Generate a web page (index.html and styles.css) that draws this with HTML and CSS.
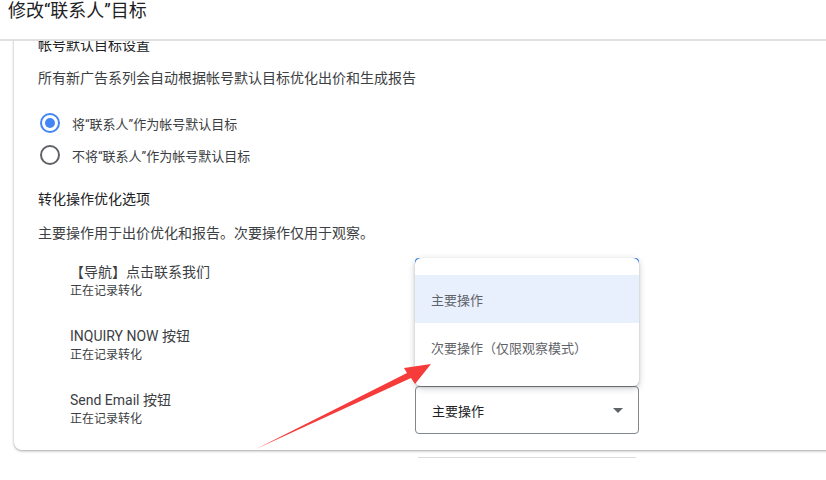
FILE: index.html
```html
<!DOCTYPE html>
<html>
  <head>
    <title>修改“联系人”目标</title>
    <link rel="stylesheet" href="styles.css">
  </head>
  <body>
    <!-- Dialog header -->
    <header class="top">
      <h1>修改“联系人”目标</h1>
    </header>

    <!-- Scrolled dialog content -->
    <main class="scroller">
      <section class="card">
        <h2 class="card-title">帐号默认目标设置</h2>
        <p class="desc">所有新广告系列会自动根据帐号默认目标优化出价和生成报告</p>

        <div class="radios">
          <label class="radio">
            <span class="radio-dot checked"></span>
            将“联系人”作为帐号默认目标
          </label>
          <label class="radio">
            <span class="radio-dot"></span>
            不将“联系人”作为帐号默认目标
          </label>
        </div>

        <h3 class="section-title">转化操作优化选项</h3>
        <p class="desc">主要操作用于出价优化和报告。次要操作仅用于观察。</p>

        <div class="actions">
          <div class="action">
            <div class="action-name">
              <div class="action-title">【导航】点击联系我们</div>
              <div class="action-sub">正在记录转化</div>
            </div>
            <div class="select focused">
              <span>主要操作</span>
              <span class="caret"></span>
              <!-- open dropdown menu -->
              <ul class="menu">
                <li class="menu-item active">主要操作</li>
                <li class="menu-item">次要操作（仅限观察模式）</li>
              </ul>
            </div>
          </div>

          <div class="action">
            <div class="action-name">
              <div class="action-title">INQUIRY NOW 按钮</div>
              <div class="action-sub">正在记录转化</div>
            </div>
            <div class="select">
              <span>主要操作</span>
              <span class="caret"></span>
            </div>
          </div>

          <div class="action">
            <div class="action-name">
              <div class="action-title">Send Email 按钮</div>
              <div class="action-sub">正在记录转化</div>
            </div>
            <div class="select">
              <span>主要操作</span>
              <span class="caret"></span>
            </div>
          </div>
        </div>
      </section>

      <div class="next-field"></div>
    </main>

    <!-- Annotation arrow drawn over the page -->
    <svg class="arrow" width="826" height="480" viewBox="0 0 826 480">
      <polygon points="256,449 407,373 404,368 431,364 415,384 411,378" fill="#f63b3b"/>
    </svg>
  </body>
</html>
```

FILE: styles.css
```css
body {
  margin: 0;
  font-family: Roboto, "Noto Sans CJK SC", sans-serif;
  color: #3c4043;
  background: #fff;
  width: 826px;
  height: 480px;
  overflow: hidden;
  position: relative;
}

.top {
  height: 39px;
  border-bottom: 2px solid #e0e0e0;
  padding-left: 8px;
}
.top h1 {
  margin: 0;
  font-size: 18px;
  font-weight: 400;
  line-height: 22px;
  color: #202124;
}

.scroller {
  height: 439px;
  overflow: hidden;
  padding-left: 14px;
}

.card {
  margin-top: -16px;
  margin-right: -40px;
  padding: 10px 0 16px 24px;
  background: #fff;
  border-radius: 8px;
  box-shadow: 0 1px 3px rgba(60, 64, 67, 0.35), 0 1px 2px rgba(60, 64, 67, 0.15);
}

.card-title,
.section-title {
  margin: 0;
  font-size: 14px;
  font-weight: 400;
  line-height: 20px;
  color: #202124;
}

.desc {
  margin: 13px 0 0;
  font-size: 14px;
  line-height: 20px;
}
.section-title {
  margin-top: 18px;
}
.section-title + .desc {
  margin-top: 14px;
}

.radios {
  margin-top: 19px;
  display: flex;
  flex-direction: column;
}
.radio {
  height: 32px;
  display: flex;
  align-items: center;
  gap: 12px;
  font-size: 13px;
  padding-left: 2px;
}
.radio-dot {
  width: 16px;
  height: 16px;
  border: 2px solid #5f6368;
  border-radius: 50%;
  display: flex;
  align-items: center;
  justify-content: center;
}
.radio-dot.checked {
  border-color: #4285f4;
}
.radio-dot.checked::after {
  content: "";
  width: 10px;
  height: 10px;
  border-radius: 50%;
  background: #4285f4;
}

.actions {
  margin-top: 15px;
  padding-left: 32px;
  display: flex;
  flex-direction: column;
  gap: 16px;
}
.action {
  display: grid;
  grid-template-columns: 345px 224px;
  height: 48px;
}
.action-name {
  display: flex;
  flex-direction: column;
  justify-content: center;
}
.action-title {
  font-size: 14px;
  line-height: 19px;
}
.action-sub {
  font-size: 12px;
  line-height: 19px;
}

.select {
  position: relative;
  box-sizing: border-box;
  height: 48px;
  border: 1px solid #80868b;
  border-radius: 4px;
  padding: 0 16px;
  display: flex;
  align-items: center;
  justify-content: space-between;
  font-size: 13px;
  color: #202124;
}
.select.focused {
  border: 2px solid #1a73e8;
}
.caret {
  width: 0;
  height: 0;
  border-left: 5px solid transparent;
  border-right: 5px solid transparent;
  border-top: 5px solid #5f6368;
  margin-right: -1px;
}

.menu {
  position: absolute;
  top: -2px;
  left: -2px;
  width: 224px;
  margin: 0;
  padding: 17px 0 15px;
  list-style: none;
  background: #fff;
  border-radius: 6px;
  box-shadow: 0 2px 6px rgba(60, 64, 67, 0.3), 0 1px 2px rgba(60, 64, 67, 0.2);
  z-index: 2;
}
.menu-item {
  height: 48px;
  display: flex;
  align-items: center;
  padding-left: 16px;
  font-size: 13px;
  color: #5f6368;
}
.menu-item.active {
  background: #e8f0fe;
}

.next-field {
  margin: 7px 0 0 404px;
  width: 218px;
  border-top: 1px solid #dadce0;
}

.arrow {
  position: absolute;
  left: 0;
  top: 0;
  pointer-events: none;
  z-index: 3;
}
```
